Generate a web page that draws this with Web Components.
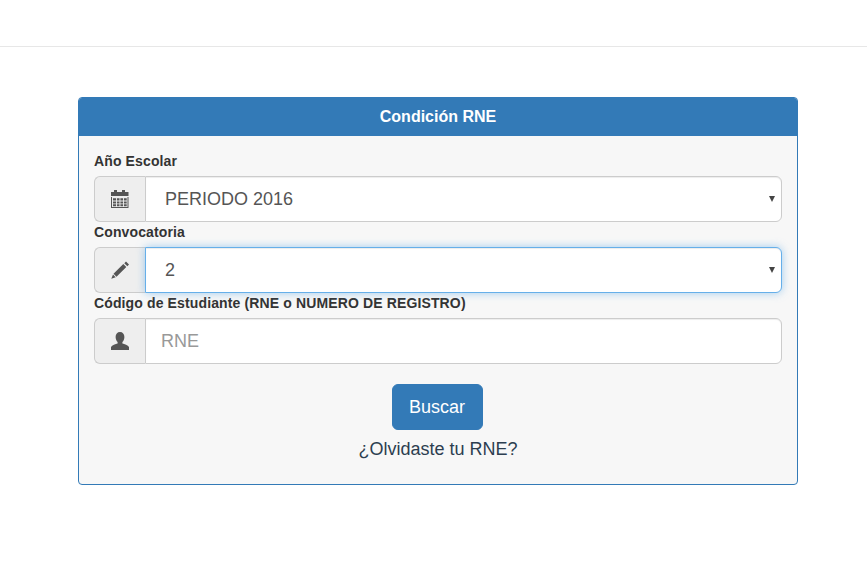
<!DOCTYPE html>
<html lang="es">
<head>
<meta charset="utf-8">
<title>Condición RNE</title>
<style>
  body { margin: 0; background: #fff; font-family: "Liberation Sans", Arial, sans-serif; color: #333; }
</style>
</head>
<body>
<app-navbar></app-navbar>
<rne-panel heading="Condición RNE">
  <form-field label="Año Escolar" icon="calendar" kind="select">PERIODO 2016</form-field>
  <form-field label="Convocatoria" icon="pencil" kind="select" focused>2</form-field>
  <form-field label="Código de Estudiante (RNE o NUMERO DE REGISTRO)" icon="user" kind="input" placeholder="RNE"></form-field>
  <form-actions></form-actions>
</rne-panel>

<script>
// iconos estilo glyphicon, dibujados en una caja de 18x18
const ICONS = {
  calendar: `<path d="M3 0h3v2h5V0h3v2h3.500v4H0V2h3z"/>
    <path d="M0 7h1v11H0zM16.500 7h1v11h-1zM0 17h17.500v1H0zM2 8.200h3v2.400H2zM5.900 8.200h2.600v2.400H5.900zM9.400 8.200h2.600v2.400H9.400zM12.900 8.200h2.800v2.400h-2.800zM2 11.400h3v2.200H2zM5.900 11.400h2.600v2.200H5.900zM9.400 11.400h2.600v2.200H9.400zM12.900 11.400h2.800v2.200h-2.800zM2 14.300h3v2H2zM5.900 14.300h2.600v2H5.900zM9.400 14.300h2.600v2H9.400zM12.900 14.300h2.800v2h-2.800z"/>`,
  pencil: `<path d="M15 0.500l3 3-1.700 1.700-3-3zM12.300 3l3 3-9.800 9.700-3-3zM2 13.500l2.700 2.700-4.400 1.500z"/>`,
  user: `<path d="M9 0c2.700 0 4.400 2.100 4.400 5 0 2.300-1 4-2 5.100v1.500c2 0.800 5.600 1.500 6.600 3.300V18H0v-3.100c1-1.800 4.600-2.500 6.600-3.300v-1.500c-1-1.100-2-2.800-2-5.100C4.600 2.100 6.300 0 9 0z"/>`
};

class AppNavbar extends HTMLElement {
  connectedCallback() {
    this.attachShadow({ mode: 'open' }).innerHTML = `
      <style>
        :host { display:block; height:46px; border-bottom:1px solid #e7e7e7; background:#fff; }
      </style>`;
  }
}

class RnePanel extends HTMLElement {
  connectedCallback() {
    this.attachShadow({ mode: 'open' }).innerHTML = `
      <style>
        :host { display:block; box-sizing:border-box; width:720px; margin:50px 0 0 78px; border:1px solid #337ab7; border-radius:4px; background:#f7f7f7; }
        .heading { height:38px; display:flex; align-items:center; justify-content:center; background:#337ab7; color:#fff; font:bold 16px "Liberation Sans", Arial, sans-serif; border-radius:3px 3px 0 0; }
        .body { padding:15px 15px 0; height:348px; box-sizing:border-box; }
      </style>
      <div class="heading">${this.getAttribute('heading')}</div>
      <div class="body"><slot></slot></div>`;
  }
}

class FormField extends HTMLElement {
  connectedCallback() {
    const kind = this.getAttribute('kind');
    const icon = ICONS[this.getAttribute('icon')];
    const focused = this.hasAttribute('focused');
    const placeholder = this.getAttribute('placeholder');
    this.attachShadow({ mode: 'open' }).innerHTML = `
      <style>
        :host { display:block; font:14px/20px "Liberation Sans", Arial, sans-serif; color:#333; }
        label { display:block; font-weight:bold; font-size:14px; letter-spacing:.13px; line-height:21px; margin-bottom:5px; height:20px; }
        .group { display:flex; height:46px; }
        .addon { box-sizing:border-box; flex:0 0 51px; display:flex; align-items:center; justify-content:center; background:#eee; border:1px solid #ccc; border-right:0; border-radius:6px 0 0 6px; }
        .addon svg { width:18px; height:18px; fill:#555; display:block; }
        .control { flex:1; box-sizing:border-box; position:relative; display:flex; align-items:center; background:#fff; border:1px solid #ccc; border-radius:0 6px 6px 0; font-size:18px; color:#555; padding-left:15px; box-shadow:inset 0 1px 1px rgba(0,0,0,.075); }
        .select { padding-left:19px; }
        .focused { border-color:#66afe9; box-shadow:inset 0 1px 1px rgba(0,0,0,.075), 0 0 8px rgba(102,175,233,.6); }
        .placeholder { color:#999; }
        .arrow { position:absolute; right:6px; top:19px; width:0; height:0; border-left:3px solid transparent; border-right:3px solid transparent; border-top:6px solid #444; }
      </style>
      <label>${this.getAttribute('label')}</label>
      <div class="group">
        <span class="addon"><svg viewBox="0 0 18 18">${icon}</svg></span>
        <div class="control ${kind === 'select' ? 'select' : ''} ${focused ? 'focused' : ''}">
          ${placeholder ? `<span class="placeholder">${placeholder}</span>` : '<slot></slot>'}
          ${kind === 'select' ? '<span class="arrow"></span>' : ''}
        </div>
      </div>`;
  }
}

class FormActions extends HTMLElement {
  connectedCallback() {
    this.attachShadow({ mode: 'open' }).innerHTML = `
      <style>
        :host { display:flex; flex-direction:column; align-items:center; padding-top:20px; font:18px "Liberation Sans", Arial, sans-serif; }
        button { box-sizing:border-box; width:91px; height:46px; margin-right:2px; background:#337ab7; border:1px solid #337ab7; border-radius:6px; color:#fff; font:18px "Liberation Sans", Arial, sans-serif; padding:0; }
        a { margin-top:8px; line-height:22px; color:#2c3e50; text-decoration:none; }
      </style>
      <button type="button">Buscar</button>
      <a href="#">¿Olvidaste tu RNE?</a>`;
  }
}

customElements.define('app-navbar', AppNavbar);
customElements.define('rne-panel', RnePanel);
customElements.define('form-field', FormField);
customElements.define('form-actions', FormActions);
</script>
</body>
</html>
